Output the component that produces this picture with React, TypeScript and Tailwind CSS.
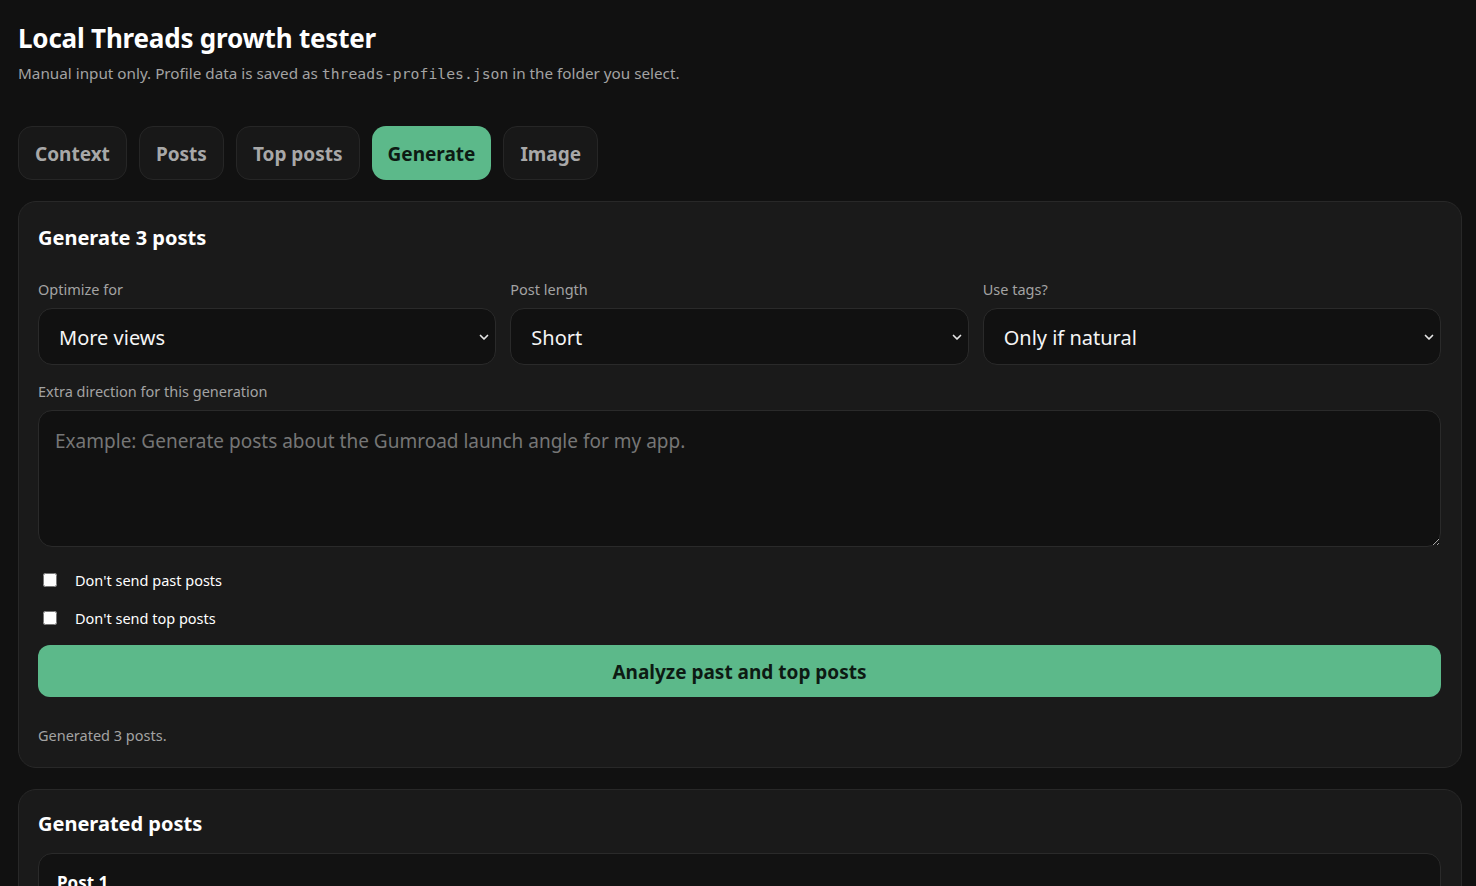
import React from "react";

const font = { fontFamily: '"Noto Sans", "Open Sans", sans-serif' };

function Chevron() {
  return (
    <svg
      className="pointer-events-none absolute right-[6px] top-1/2 -translate-y-1/2"
      width="12"
      height="12"
      viewBox="0 0 12 12"
      fill="none"
    >
      <path d="M2.5 4.5 L6 8 L9.5 4.5" stroke="#e5e5e5" strokeWidth="1.7" strokeLinecap="round" strokeLinejoin="round" />
    </svg>
  );
}

function SelectField({ label, value }: { label: string; value: string }) {
  return (
    <div className="flex flex-col">
      <label className="text-[14.5px] leading-[20px] text-[#a3a3a3] mb-[9px]">{label}</label>
      <div className="relative">
        <select
          defaultValue={value}
          className="w-full h-[57px] appearance-none rounded-[14px] border border-[#2a2a2a] bg-[#111111] pl-[20px] pr-8 pt-[3px] text-[20px] text-[#f5f5f5] outline-none"
        >
          <option>{value}</option>
        </select>
        <Chevron />
      </div>
    </div>
  );
}

export default function App() {
  const tabs = ["Context", "Posts", "Top posts", "Generate", "Image"];
  return (
    <div className="min-h-screen bg-[#111111] text-white pl-[18px] pr-[14px] pt-[20px]" style={font}>
      <h1 className="text-[26px] leading-[36px] font-bold tracking-[-0.2px]">Local Threads growth tester</h1>
      <p className="mt-[7px] text-[15.25px] leading-[20px] text-[#a3a3a3]">
        Manual input only. Profile data is saved as{" "}
        <code className="text-[14.75px]" style={{ fontFamily: '"DejaVu Sans Mono", monospace' }}>threads-profiles.json</code> in the folder you select.
      </p>

      <div className="mt-[42px] flex gap-[12px]">
        {tabs.map((t) =>
          t === "Generate" ? (
            <button
              key={t}
              className="h-[54px] px-[16px] pt-[3px] rounded-[14px] bg-[#5cb98a] text-[#0d1a13] text-[19px] font-bold"
            >
              {t}
            </button>
          ) : (
            <button
              key={t}
              className="h-[54px] px-[16px] pt-[3px] rounded-[14px] border border-[#262626] bg-[#181818] text-[#a8a8a8] text-[19px] font-bold"
            >
              {t}
            </button>
          )
        )}
      </div>

      <section className="mt-[21px] rounded-[18px] border border-[#282828] bg-[#1a1a1a] pl-[19px] pr-[20px] pt-[20px] pb-[22px]">
        <h2 className="text-[20px] leading-[32px] font-bold">Generate 3 posts</h2>
        <div className="mt-[25px] grid grid-cols-3 gap-[14px]">
          <SelectField label="Optimize for" value="More views" />
          <SelectField label="Post length" value="Short" />
          <SelectField label="Use tags?" value="Only if natural" />
        </div>
        <label className="mt-[16px] block text-[14.5px] leading-[20px] text-[#a3a3a3]">Extra direction for this generation</label>
        <textarea
          className="mt-[9px] block w-full h-[137px] rounded-[14px] border border-[#2a2a2a] bg-[#111111] px-[16px] py-[16px] text-[19px] leading-[28px] text-white placeholder:text-[#767676] outline-none"
          placeholder="Example: Generate posts about the Gumroad launch angle for my app."
        />
        <div className="mt-[25px] flex flex-col gap-[22px]">
          <label className="flex items-center gap-[18px] pl-[5px] text-[14.5px] leading-[16px] text-white">
            <input type="checkbox" className="w-[14px] h-[14px] m-0" />
            Don't send past posts
          </label>
          <label className="flex items-center gap-[18px] pl-[5px] text-[14.5px] leading-[16px] text-white">
            <input type="checkbox" className="w-[14px] h-[14px] m-0" />
            Don't send top posts
          </label>
        </div>
        <button className="mt-[19px] w-full h-[52px] rounded-[12px] bg-[#5cb98a] text-[#0d1a13] text-[19px] font-bold pt-[2px]">
          Analyze past and top posts
        </button>
        <p className="mt-[28px] text-[14.5px] leading-[20px] text-[#a3a3a3]">Generated 3 posts.</p>
      </section>

      <section className="mt-[21px] rounded-[18px] border border-[#282828] bg-[#1a1a1a] pl-[19px] pr-[20px] pt-[18px] pb-[20px]">
        <h2 className="text-[20px] leading-[32px] font-bold">Generated posts</h2>
        <div className="mt-[13px] rounded-[14px] border border-[#2a2a2a] bg-[#121212] px-[18px] pt-[16px] pb-[18px]">
          <h3 className="text-[17px] font-bold">Post 1</h3>
          <p className="mt-2 text-[15px] text-[#e5e5e5]">…</p>
        </div>
      </section>
    </div>
  );
}
